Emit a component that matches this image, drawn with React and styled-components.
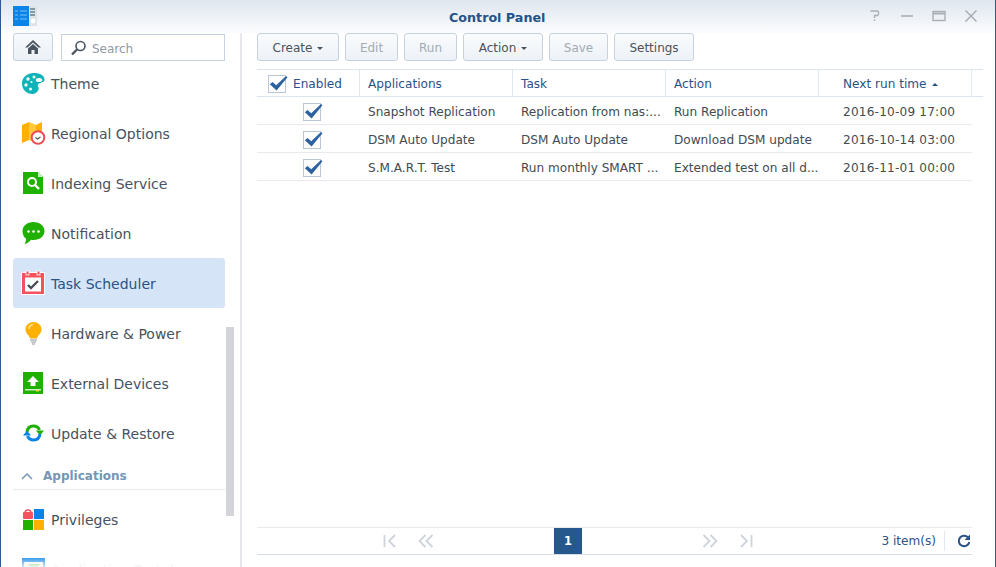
import React from 'react';
import styled, { createGlobalStyle } from 'styled-components';

const Global = createGlobalStyle`
  html, body { margin: 0; padding: 0; background: #fff; }
  * { box-sizing: border-box; }
`;

const Window = styled.div`
  width: 996px;
  height: 567px;
  overflow: hidden;
  display: flex;
  flex-direction: column;
  background: #fff;
  border-left: 1px solid #2a5a8f;
  border-right: 1px solid #2f5f7f;
  font-family: "DejaVu Sans", Verdana, sans-serif;
  font-size: 12.1px;
  color: #414b55;
`;

const TitleBar = styled.header`
  flex: 0 0 33px;
  display: flex;
  align-items: center;
  justify-content: space-between;
  padding: 0 15px 1px 12px;
  background: linear-gradient(#dfe6ef, #fbfcfd);
  position: relative;
`;

const Title = styled.h1`
  position: absolute;
  left: 448px;
  top: 10px;
  margin: 0;
  font-size: 12.7px;
  line-height: 16px;
  font-weight: 700;
  color: #24538a;
`;

const WindowButtons = styled.div`
  display: flex;
  gap: 14px;
  svg { display: block; }
`;

const Body = styled.div`
  flex: 1;
  display: flex;
  min-height: 0;
`;

const Sidebar = styled.aside`
  flex: 0 0 241px;
  padding-left: 12px;
  border-right: 2px solid #e6e8eb;
  position: relative;
  overflow: hidden;
`;

const SearchRow = styled.div`
  display: flex;
  gap: 8px;
  width: 212px;
  height: 28px;
  margin-bottom: -3px;
`;

const HomeButton = styled.button`
  width: 40px;
  height: 28px;
  padding: 0;
  display: flex;
  align-items: center;
  justify-content: center;
  background: linear-gradient(#f8fafc, #eaf0f6);
  border: 1px solid #c6d2e0;
  border-radius: 3px;
`;

const SearchBox = styled.div`
  flex: 1;
  height: 27px;
  margin-top: 1px;
  display: flex;
  align-items: center;
  gap: 4px;
  padding-left: 8px;
  border: 1px solid #c6d2e2;
  color: #8f99a6;
  font-size: 12px;
`;

const SearchLabel = styled.span`
  padding-top: 2px;
`;

const NavItem = styled.div`
  width: 212px;
  height: 50px;
  display: flex;
  align-items: center;
  gap: 6px;
  padding-left: 9px;
  border-radius: 3px;
  font-size: 14px;
  white-space: nowrap;
  background: ${(p) => (p.$active ? '#d5e5f7' : 'transparent')};
  color: ${(p) => (p.$active ? '#2b5286' : p.$faded ? '#d3d6da' : '#47525e')};
  svg { flex: 0 0 23px; display: block; overflow: visible; }
`;

const NavLabel = styled.span`
  margin-top: 2px;
`;

const SectionHead = styled.div`
  width: 212px;
  height: 32px;
  display: flex;
  align-items: center;
  gap: 10px;
  padding: 4px 0 0 8px;
  border-bottom: 1px solid #e8ebee;
  font-size: 12px;
  font-weight: 700;
  color: #7296b8;
`;

const SectionBody = styled.div`
  padding-top: 4px;
`;

const Scrollbar = styled.div`
  position: absolute;
  left: 225px;
  top: 294px;
  width: 8px;
  height: 189px;
  background: #d2d4d7;
`;

const BottomFade = styled.div`
  position: absolute;
  left: 0;
  right: 12px;
  bottom: 0;
  height: 9px;
  background: linear-gradient(rgba(255, 255, 255, 0.2), rgba(255, 255, 255, 0.8));
`;

const Main = styled.main`
  flex: 1;
  min-width: 0;
  padding: 0 12px 0 15px;
  display: flex;
  flex-direction: column;
`;

const Toolbar = styled.div`
  display: flex;
  gap: 6px;
  height: 28px;
  margin-bottom: 8px;
`;

const Button = styled.button`
  width: ${(p) => p.$w}px;
  height: 28px;
  padding: 2px 0 0;
  display: flex;
  align-items: center;
  justify-content: center;
  gap: 5px;
  font-family: inherit;
  font-size: 12px;
  background: linear-gradient(#fafbfd, #edf2f7);
  border: 1px solid #c6d2e0;
  border-radius: 3px;
  color: ${(p) => (p.disabled ? '#a3abb4' : '#47525e')};
`;

const Caret = styled.span`
  width: 0;
  height: 0;
  margin-top: 1px;
  border-left: 3px solid transparent;
  border-right: 3px solid transparent;
  border-top: 3px solid #47525e;
`;

const HeaderRow = styled.div`
  display: grid;
  grid-template-columns: 103px 153px 153px 153px 153px 11px;
  height: 28px;
  border-top: 1px solid #dce4ed;
  border-bottom: 1px solid #dce4ed;
  color: #2b5286;
`;

const HeadCell = styled.div`
  display: flex;
  align-items: center;
  gap: 6px;
  padding-left: ${(p) => p.$pad || 8}px;
  padding-top: 2px;
  border-right: ${(p) => (p.$last ? 'none' : '1px solid #e1e8f0')};
  white-space: nowrap;
`;

const SortUp = styled.span`
  width: 0;
  height: 0;
  margin-left: -1px;
  border-left: 3px solid transparent;
  border-right: 3px solid transparent;
  border-bottom: 3px solid #2b5286;
`;

const Row = styled.div`
  display: grid;
  grid-template-columns: 103px 153px 153px 153px 153px;
  height: 28px;
  width: 715px;
  border-bottom: 1px solid #e6eaef;
`;

const Cell = styled.div`
  display: flex;
  align-items: center;
  justify-content: ${(p) => (p.$center ? 'center' : 'flex-start')};
  padding-left: ${(p) => (p.$center ? 6 : p.$pad || 8)}px;
  padding-top: 2px;
  white-space: nowrap;
  overflow: ${(p) => (p.$center ? 'visible' : 'hidden')};
  letter-spacing: ${(p) => (p.$date ? '0.2px' : 'normal')};
`;

const HeadCheck = styled.span`
  display: block;
  margin-right: 1px;
`;

const CheckFrame = styled.span`
  width: 18px;
  height: 18px;
  flex: 0 0 18px;
  display: block;
  position: relative;
  border: 1px solid #b9c6d6;
  background: #fff;
  svg { position: absolute; left: 0; top: 0; overflow: visible; }
`;

const TableSpace = styled.div`
  flex: 1;
`;

const Pager = styled.footer`
  height: 28px;
  width: 715px;
  margin-bottom: 12px;
  display: flex;
  align-items: center;
  border-top: 1px solid #e6eaef;
  border-bottom: 1px solid #d5dde6;
  position: relative;
`;

const PagerArrows = styled.div`
  display: flex;
  align-items: center;
  padding-left: ${(p) => p.$pad || 0}px;
  gap: 21px;
  svg { display: block; }
`;

const PageNumber = styled.div`
  width: 28px;
  height: 26px;
  margin: 0 120px;
  display: flex;
  align-items: center;
  justify-content: center;
  background: #26588d;
  color: #fff;
  font-size: 11.5px;
  font-weight: 700;
`;

const PagerInfo = styled.div`
  margin-left: auto;
  height: 20px;
  display: flex;
  align-items: center;
  color: #2b5286;
  svg { display: block; margin: 0 1px 0 12px; }
`;

const Divider = styled.span`
  width: 1px;
  height: 20px;
  margin-left: 8px;
  background: #e1e8f0;
`;

const Theme = () => (
  <svg width="23" height="21" viewBox="0 0 23 21">
    <path d="M12 0c6 0 10.500 2.500 10.500 6.500 0 3.500-5 3-6.500 5-1.200 1.800 1.500 3 .5 5.300C15.500 19.500 13 21 10.500 21 4.500 21 0 16.500 0 10.500 0 4.500 5 0 12 0z" fill="#0fb3b8" />
    <circle cx="6" cy="6" r="1.700" fill="#fff" />
    <circle cx="12" cy="4" r="1.500" fill="#fff" />
    <circle cx="4" cy="12" r="1.700" fill="#fff" />
    <circle cx="8.500" cy="16" r="1.500" fill="#fff" />
    <ellipse cx="17" cy="7" rx="3.200" ry="2.100" fill="#fff" />
    <circle cx="9.500" cy="9" r="1.100" fill="#fff" />
  </svg>
);

const Regional = () => (
  <svg width="23" height="23" viewBox="0 0 23 23">
    <path d="M0 3l7-3v18l-7 3z" fill="#ffb000" />
    <path d="M7 0l7 3v18l-7-3z" fill="#ffc93a" />
    <path d="M14 3l6-3v14h-6z" fill="#ffb000" />
    <circle cx="16" cy="15.500" r="6.300" fill="#fff" stroke="#ee4b55" strokeWidth="2" />
    <path d="M13.500 15.500l2 1.500 3-2" fill="none" stroke="#555" strokeWidth="1.200" />
  </svg>
);

const Indexing = () => (
  <svg width="23" height="22" viewBox="0 0 23 22">
    <path d="M1 0h15l5 5v17H1z" fill="#1fb000" />
    <path d="M16 0l5 5h-5z" fill="#c9efc4" />
    <circle cx="10" cy="10" r="4" fill="none" stroke="#fff" strokeWidth="2" />
    <path d="M13 13l4 4" stroke="#fff" strokeWidth="2.400" />
  </svg>
);

const Notification = () => (
  <svg width="23" height="22" viewBox="0 0 23 22">
    <path d="M11.500 0C18 0 22.500 4 22.500 9s-4.500 9-11 9c-1 0-1.500 0-2.500-.2C7.500 20 5 21.500 2.500 22c1-1.500 1.500-3 1.600-5.200C1.500 15 .5 12 .5 9 .5 4 5 0 11.500 0z" fill="#1fb000" />
    <circle cx="6.500" cy="9.500" r="1.300" fill="#fff" />
    <circle cx="11.500" cy="9.500" r="1.300" fill="#fff" />
    <circle cx="16.500" cy="9.500" r="1.300" fill="#fff" />
  </svg>
);

const Scheduler = () => (
  <svg width="23" height="24" viewBox="0 0 23 24">
    <rect x="-.5" y="1.500" width="23" height="22" fill="#f2535c" stroke="#fff" strokeWidth="1" />
    <rect x="3" y="6.500" width="16" height="14" fill="#fff" />
    <rect x="4" y="0" width="3" height="4" fill="#f2535c" stroke="#fff" strokeWidth=".8" />
    <rect x="15" y="0" width="3" height="4" fill="#f2535c" stroke="#fff" strokeWidth=".8" />
    <path d="M6 14l3 3 7-7" fill="none" stroke="#4a4f57" strokeWidth="2.400" />
  </svg>
);

const Bulb = () => (
  <svg width="23" height="22" viewBox="0 0 23 22">
    <path d="M11.500 0c4.500 0 8 3.300 8 7.500 0 4.500-4 5.500-4.500 9h-7c-.5-3.500-4.500-4.500-4.500-9C3.500 3.300 7 0 11.500 0z" fill="#ffb000" />
    <path d="M7 7c0-2 1.500-4 4-4.500" fill="none" stroke="#ffe39a" strokeWidth="1.400" />
    <path d="M8 18h7M9 20h5M10 22h3" stroke="#8d949c" strokeWidth="1" />
  </svg>
);

const External = () => (
  <svg width="23" height="22" viewBox="0 0 23 22">
    <rect x="1" y="0" width="20" height="22" fill="#1fb000" />
    <path d="M11 4l6 6h-3.500v4h-5v-4H5z" fill="#fff" />
    <rect x="3" y="17" width="16" height="1.500" fill="#c9efc4" />
    <rect x="14" y="18" width="3" height="1.500" fill="#ffcf33" />
  </svg>
);

const UpdateIcon = () => (
  <svg width="23" height="20" viewBox="0 0 23 20">
    <path d="M5 9c.5-4 3-6 6.500-6 3 0 5 1.500 6 4" fill="none" stroke="#1fb000" strokeWidth="3" />
    <path d="M14 7.500h8l-4 5z" fill="#1fb000" />
    <path d="M18 11c-.5 4-3 6-6.500 6-3 0-5-1.500-6-4" fill="none" stroke="#0a84e6" strokeWidth="3" />
    <path d="M1 12.500h8l-4-5z" fill="#0a84e6" />
  </svg>
);

const Privileges = () => (
  <svg width="23" height="22" viewBox="0 0 23 22">
    <path d="M3 5a3 3 0 0 1 6 0" fill="none" stroke="#f2535c" strokeWidth="1.600" />
    <rect x="1" y="4" width="10" height="7" rx="1" fill="#f2535c" />
    <rect x="12" y="1" width="10" height="10" fill="#0a84e6" />
    <rect x="1" y="12" width="10" height="10" fill="#1fb000" />
    <rect x="12" y="12" width="10" height="10" fill="#ffb000" />
  </svg>
);

const Portal = () => (
  <svg width="23" height="22" viewBox="0 0 23 22">
    <rect x="0" y="0" width="23" height="22" fill="#0a84e6" />
    <rect x="2" y="4" width="19" height="16" fill="#e7f3ea" />
    <path d="M6 6h12l-5 7z" fill="#7ac77a" />
  </svg>
);

const Check = () => (
  <svg width="20" height="16" viewBox="0 0 20 16">
    <path d="M.8 8.200L3.600 6l3.600 3.200L17 0l1.500 1.300L7.600 14.600z" fill="#2c62a0" />
  </svg>
);

const FirstIcon = ({ flip }) => (
  <svg width="14" height="14" viewBox="0 0 14 14" style={flip ? { transform: 'scaleX(-1)' } : undefined}>
    <path d="M1.500 1v12M12 1L6 7l6 6" fill="none" stroke="#cdd4dc" strokeWidth="1.800" />
  </svg>
);

const DoubleIcon = ({ flip }) => (
  <svg width="16" height="14" viewBox="0 0 16 14" style={flip ? { transform: 'scaleX(-1)' } : undefined}>
    <path d="M7.500 1L1.500 7l6 6M14.500 1L8.500 7l6 6" fill="none" stroke="#cdd4dc" strokeWidth="1.800" />
  </svg>
);

const navTop = [
  { label: 'Theme', Icon: Theme },
  { label: 'Regional Options', Icon: Regional },
  { label: 'Indexing Service', Icon: Indexing },
  { label: 'Notification', Icon: Notification },
  { label: 'Task Scheduler', Icon: Scheduler, active: true },
  { label: 'Hardware & Power', Icon: Bulb },
  { label: 'External Devices', Icon: External },
  { label: 'Update & Restore', Icon: UpdateIcon },
];

const navApps = [
  { label: 'Privileges', Icon: Privileges },
  { label: 'Application Portal', Icon: Portal, faded: true },
];

const tasks = [
  ['Snapshot Replication', 'Replication from nas:...', 'Run Replication', '2016-10-09 17:00'],
  ['DSM Auto Update', 'DSM Auto Update', 'Download DSM update', '2016-10-14 03:00'],
  ['S.M.A.R.T. Test', 'Run monthly SMART ...', 'Extended test on all d...', '2016-11-01 00:00'],
];

const renderNav = (item) => (
  <NavItem key={item.label} $active={item.active} $faded={item.faded}>
    <item.Icon />
    <NavLabel>{item.label}</NavLabel>
  </NavItem>
);

export default function App() {
  return (
    <Window>
      <Global />
      <TitleBar>
        <svg width="25" height="20" viewBox="0 0 25 20">
          <rect x="0" y="0" width="16" height="20" fill="#0a84e6" />
          <path d="M2 5h3M7 5h7M2 9h3M7 9h7M2 13h3M7 13h7" stroke="#7cc2f7" strokeWidth="1" />
          <rect x="16" y="0" width="8" height="20" fill="#dfe3e8" />
          <path d="M17 3h5M17 6h5M17 9h5" stroke="#28505f" strokeWidth="1.200" />
          <circle cx="20" cy="15" r="2.400" fill="#fff" />
        </svg>
        <Title>Control Panel</Title>
        <WindowButtons>
          <svg width="18" height="12" viewBox="0 0 18 12">
            <path d="M4.500 1h7l1 1v2.500l-1 1H8.500V8M8.500 9.500V11" fill="none" stroke="#a9afb6" strokeWidth="1.400" />
          </svg>
          <svg width="18" height="12" viewBox="0 0 18 12">
            <path d="M3 6h12" stroke="#a9afb6" strokeWidth="1.600" />
          </svg>
          <svg width="18" height="12" viewBox="0 0 18 12">
            <rect x="3" y="1.500" width="12" height="9" fill="none" stroke="#a9afb6" strokeWidth="1.400" />
            <path d="M3 3.500h12" stroke="#a9afb6" strokeWidth="2" />
          </svg>
          <svg width="18" height="12" viewBox="0 0 18 12">
            <path d="M3.500 .5l11 11M14.500 .5l-11 11" stroke="#a9afb6" strokeWidth="1.500" />
          </svg>
        </WindowButtons>
      </TitleBar>
      <Body>
        <Sidebar>
          <SearchRow>
            <HomeButton aria-label="Home">
              <svg width="16" height="16" viewBox="0 0 16 16">
                <path d="M8 1L0 8.500h2.500L8 3.500l5.500 5H16z" fill="#4a5561" />
                <path d="M3 9.500L8 5l5 4.500V15H9.500v-4h-3v4H3z" fill="#4a5561" />
              </svg>
            </HomeButton>
            <SearchBox>
              <svg width="18" height="16" viewBox="0 0 18 16">
                <circle cx="10.500" cy="6" r="4.500" fill="none" stroke="#4a5561" strokeWidth="1.600" />
                <path d="M7 9.500L2 14.500" stroke="#4a5561" strokeWidth="2.400" />
              </svg>
              <SearchLabel>Search</SearchLabel>
            </SearchBox>
          </SearchRow>
          {navTop.map(renderNav)}
          <SectionHead>
            <svg width="12" height="8" viewBox="0 0 12 8">
              <path d="M1 7l5-5 5 5" fill="none" stroke="#7296b8" strokeWidth="1.500" />
            </svg>
            Applications
          </SectionHead>
          <SectionBody>{navApps.map(renderNav)}</SectionBody>
          <Scrollbar />
          <BottomFade />
        </Sidebar>
        <Main>
          <Toolbar>
            <Button $w={82}>Create <Caret /></Button>
            <Button $w={53} disabled>Edit</Button>
            <Button $w={53} disabled>Run</Button>
            <Button $w={80}>Action <Caret /></Button>
            <Button $w={59} disabled>Save</Button>
            <Button $w={80}>Settings</Button>
          </Toolbar>
          <HeaderRow>
            <HeadCell $pad={11}>
              <HeadCheck><CheckFrame><Check /></CheckFrame></HeadCheck>
              Enabled
            </HeadCell>
            <HeadCell>Applications</HeadCell>
            <HeadCell>Task</HeadCell>
            <HeadCell>Action</HeadCell>
            <HeadCell $pad={24}>Next run time <SortUp /></HeadCell>
            <HeadCell $last />
          </HeaderRow>
          {tasks.map((task) => (
            <Row key={task[0]}>
              <Cell $center>
                <CheckFrame><Check /></CheckFrame>
              </Cell>
              <Cell>{task[0]}</Cell>
              <Cell>{task[1]}</Cell>
              <Cell>{task[2]}</Cell>
              <Cell $pad={24} $date>{task[3]}</Cell>
            </Row>
          ))}
          <TableSpace />
          <Pager>
            <PagerArrows $pad={126}>
              <FirstIcon />
              <DoubleIcon />
            </PagerArrows>
            <PageNumber>1</PageNumber>
            <PagerArrows>
              <DoubleIcon flip />
              <FirstIcon flip />
            </PagerArrows>
            <PagerInfo>
              3 item(s)
              <Divider />
              <svg width="14" height="14" viewBox="0 0 14 14">
                <path d="M11.500 4A5.300 5.300 0 1 0 12.300 8" fill="none" stroke="#2b5286" strokeWidth="2" />
                <path d="M13 .5v5.500H7.500z" fill="#2b5286" />
              </svg>
            </PagerInfo>
          </Pager>
        </Main>
      </Body>
    </Window>
  );
}
